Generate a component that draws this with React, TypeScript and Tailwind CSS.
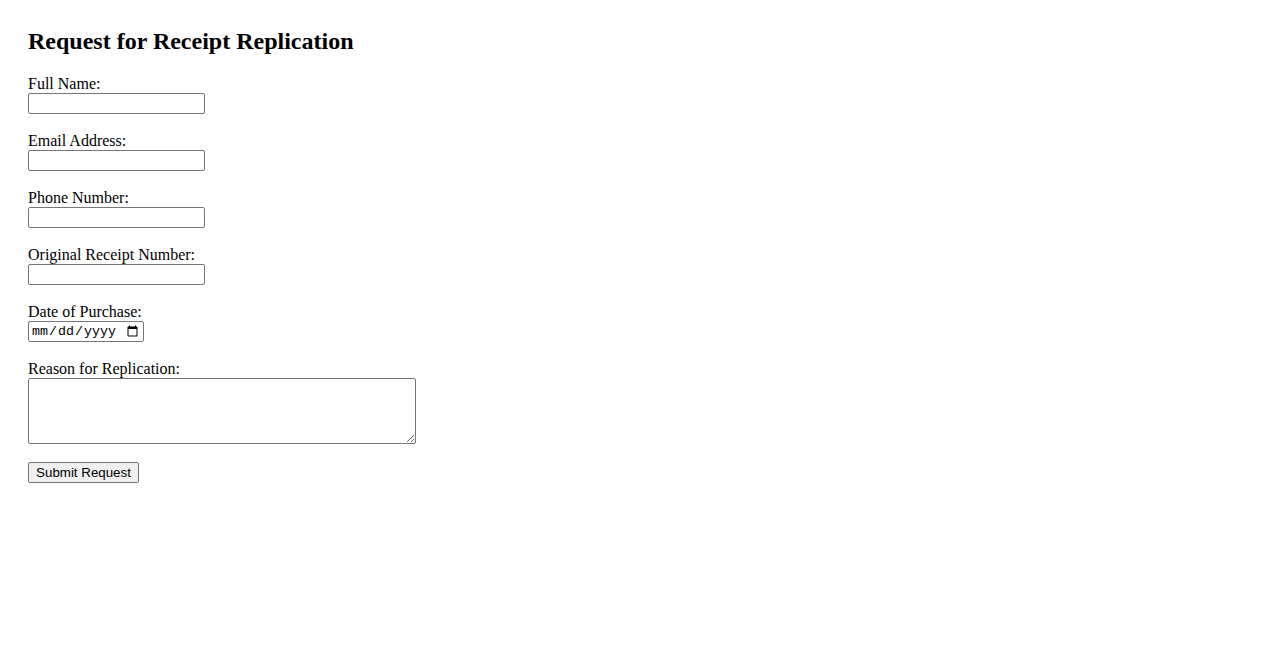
export default function App() {
  const fields = [
    { label: "Full Name:", type: "text" },
    { label: "Email Address:", type: "email" },
    { label: "Phone Number:", type: "tel" },
    { label: "Original Receipt Number:", type: "text" },
  ];

  return (
    <div className="min-h-screen bg-white text-black font-['Liberation_Serif',serif] px-[28px] pt-[27px]">
      <h2 className="text-[24px] font-bold leading-[28px] mb-[19px]">
        Request for Receipt Replication
      </h2>

      <form className="flex flex-col" onSubmit={(e) => e.preventDefault()}>
        {fields.map((f) => (
          <div key={f.label} className="flex flex-col items-start mb-[17px]">
            <label className="text-[16px] leading-[18px] pt-[1px] -mb-[1px]">{f.label}</label>
            <input
              type={f.type}
              className="mt-[1px] w-[177px] h-[21px] border border-[#767676] rounded-[2px] bg-white px-[2px] text-[13.33px] font-['Liberation_Sans',sans-serif]"
            />
          </div>
        ))}

        <div className="flex flex-col items-start mb-[17px]">
          <label className="text-[16px] leading-[18px] pt-[1px] -mb-[1px]">Date of Purchase:</label>
          <input
            type="date"
            className="mt-[1px] w-[116px] h-[21px] border border-[#767676] rounded-[2px] bg-white px-[2px] text-[13.33px] font-['Liberation_Mono',monospace]"
          />
        </div>

        <div className="flex flex-col items-start">
          <label className="text-[16px] leading-[18px] pt-[1px] -mb-[1px]">Reason for Replication:</label>
          <textarea className="mt-[1px] w-[388px] h-[66px] border border-[#767676] rounded-[2px] bg-white p-[2px] text-[13.33px] font-['Liberation_Mono',monospace]" />
        </div>

        <div className="mt-[16px]">
          <button
            type="submit"
            className="w-[111px] h-[21px] border border-[#767676] rounded-[2px] bg-[#efefef] text-[13.33px] leading-[15px] font-['Liberation_Sans',sans-serif] text-black"
          >
            Submit Request
          </button>
        </div>
      </form>
    </div>
  );
}
